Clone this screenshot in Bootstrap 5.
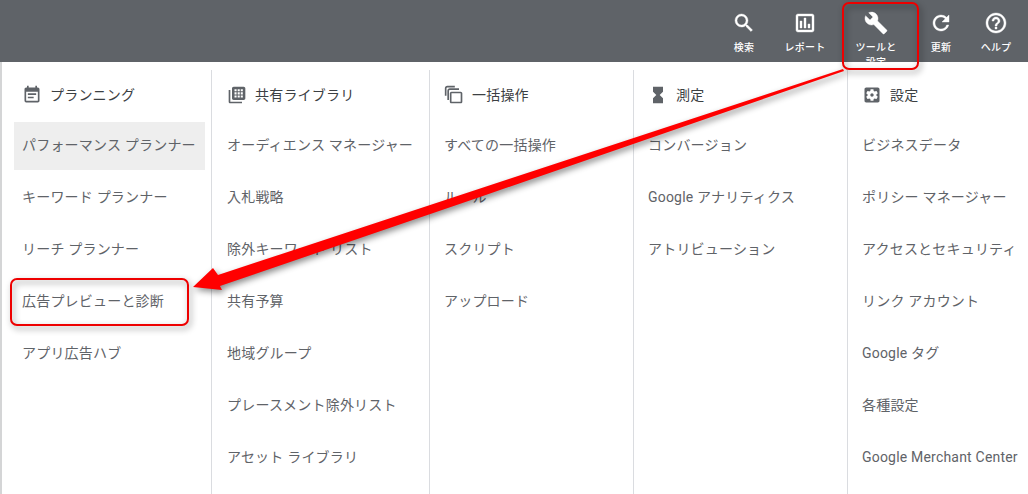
<!DOCTYPE html>
<html lang="ja">

<head>
    <meta charset="UTF-8">
    <meta name="viewport" content="width=device-width, initial-scale=1">
    <title>ツールと設定</title>
    <link href="https://cdn.jsdelivr.net/npm/bootstrap@5.3.0/dist/css/bootstrap.min.css" rel="stylesheet">
    <style>
        html, body { height: 494px; overflow: hidden; }
        body {
            position: relative;
            background: #d4d5d6;
            font-family: Roboto, "Noto Sans CJK JP", sans-serif;
            font-size: 14px;
            letter-spacing: .2px;
            color: #5f6368;
        }
        .top-bar { height: 62px; background: #5f6368; overflow: hidden; padding-right: 2px; }
        .tool-item { padding-top: 11px; color: #fff; font-size: 10px; line-height: 15px; font-weight: 500; text-align: center; }
        .tool-item svg { display: block; margin: 0 auto 5px; width: 24px; height: 24px; fill: #fff; stroke: #fff; stroke-width: .4; }
        .tool-60 { width: 60px; }
        .tool-62 { width: 62px; }
        .tool-50 { width: 50px; }
        .tool-wide { width: 80px; padding-left: 18px; padding-right: 18px; }
        .menu-panel { height: 432px; margin-left: 2px; background: #fff; padding-top: 8px; }
        .menu-col { border-left: 1px solid #dadce0; padding-left: 7px; padding-right: 6px; }
        .col-a { width: 209px; border-left: 0; padding-left: 12px; }
        .col-b { width: 218px; }
        .col-c { width: 204px; padding-left: 6px; }
        .col-d { width: 214px; padding-left: 6px; }
        .col-e { flex: 1; padding-left: 6px; padding-right: 0; }
        .menu-head { height: 48px; padding: 2px 0 0 8px; gap: 8px; color: #3c4043; white-space: nowrap; }
        .menu-head svg { width: 20px; height: 20px; fill: #5f6368; flex: none; }
        .menu-link { display: flex; align-items: center; height: 48px; margin-top: 4px; padding: 0 8px 2px; color: #5f6368; text-decoration: none; white-space: nowrap; }
        .menu-link.is-on { background: #eeeeee; }
        .notes-layer { position: absolute; left: 0; top: 0; width: 1028px; height: 494px; pointer-events: none; }
        .notes-layer .shadowed { filter: drop-shadow(2px 3px 3px rgba(0, 0, 0, .45)); }
    </style>
</head>

<body>

    <header class="top-bar d-flex justify-content-end">
        <div class="tool-item tool-60">
            <svg viewBox="0 0 24 24"><path d="M15.5 14h-.79l-.28-.27A6.471 6.471 0 0 0 16 9.5 6.5 6.5 0 1 0 9.5 16c1.61 0 3.09-.59 4.23-1.57l.27.28v.79l5 4.99L20.49 19l-4.99-5zm-6 0C7.01 14 5 11.99 5 9.5S7.01 5 9.5 5 14 7.01 14 9.5 11.99 14 9.5 14z"/></svg>
            検索
        </div>
        <div class="tool-item tool-62">
            <svg viewBox="0 0 24 24"><path d="M19 3H5c-1.1 0-2 .9-2 2v14c0 1.1.9 2 2 2h14c1.1 0 2-.9 2-2V5c0-1.1-.9-2-2-2zm0 16H5V5h14v14zM7 10h2v7H7zm4-3h2v10h-2zm4 6h2v4h-2z"/></svg>
            レポート
        </div>
        <div class="tool-item tool-wide">
            <svg viewBox="0 0 24 24"><path d="M22.7 19l-9.1-9.1c.9-2.3.4-5-1.5-6.9-2-2-5-2.4-7.4-1.3L9 6 6 9 1.6 4.7C.4 7.1.9 10.1 2.9 12.1c1.9 1.9 4.6 2.4 6.9 1.5l9.1 9.1c.4.4 1 .4 1.4 0l2.3-2.3c.5-.4.5-1.1.1-1.4z"/></svg>
            ツールと設定
        </div>
        <div class="tool-item tool-50">
            <svg viewBox="0 0 24 24"><path d="M17.65 6.35A7.958 7.958 0 0 0 12 4c-4.42 0-7.99 3.58-7.99 8s3.57 8 7.99 8c3.73 0 6.84-2.55 7.73-6h-2.08A5.99 5.99 0 0 1 12 18c-3.31 0-6-2.69-6-6s2.69-6 6-6c1.66 0 3.14.69 4.22 1.78L13 11h7V4l-2.35 2.35z"/></svg>
            更新
        </div>
        <div class="tool-item tool-60">
            <svg viewBox="0 0 24 24"><path d="M11 18h2v-2h-2v2zm1-16C6.48 2 2 6.48 2 12s4.48 10 10 10 10-4.48 10-10S17.52 2 12 2zm0 18c-4.41 0-8-3.59-8-8s3.59-8 8-8 8 3.59 8 8-3.59 8-8 8zm0-14c-2.21 0-4 1.79-4 4h2c0-1.1.9-2 2-2s2 .9 2 2c0 2-3 1.75-3 5h2c0-2.25 3-2.5 3-5 0-2.21-1.79-4-4-4z"/></svg>
            ヘルプ
        </div>
    </header>

    <div class="menu-panel d-flex">
        <!-- プランニング -->
        <div class="menu-col col-a">
            <div class="menu-head d-flex align-items-center">
                <svg viewBox="0 0 24 24"><path d="M17 10H7v2h10v-2zm2-7h-1V1h-2v2H8V1H6v2H5c-1.11 0-1.99.9-1.99 2L3 19a2 2 0 0 0 2 2h14c1.1 0 2-.9 2-2V5c0-1.1-.9-2-2-2zm0 16H5V8h14v11zm-5-5H7v2h7v-2z"/></svg>
                プランニング
            </div>
            <a class="menu-link is-on" href="#">パフォーマンス プランナー</a>
            <a class="menu-link" href="#">キーワード プランナー</a>
            <a class="menu-link" href="#">リーチ プランナー</a>
            <a class="menu-link" href="#">広告プレビューと診断</a>
            <a class="menu-link" href="#">アプリ広告ハブ</a>
        </div>

        <!-- 共有ライブラリ -->
        <div class="menu-col col-b">
            <div class="menu-head d-flex align-items-center">
                <svg viewBox="0 0 24 24"><path d="M4 6H2v14c0 1.1.9 2 2 2h14v-2H4V6z"/><path fill-rule="evenodd" d="M8 2h12c1.1 0 2 .9 2 2v12c0 1.1-.9 2-2 2H8c-1.1 0-2-.9-2-2V4c0-1.1.9-2 2-2zm1 3v2.5h2.5V5zm3.8 0v2.5h2.5V5zm3.7 0v2.5H19V5zM9 8.8v2.5h2.5V8.8zm3.8 0v2.5h2.5V8.8zm3.7 0v2.5H19V8.8zM9 12.5V15h2.5v-2.5zm3.8 0V15h2.5v-2.5zm3.7 0V15H19v-2.5z"/></svg>
                共有ライブラリ
            </div>
            <a class="menu-link" href="#">オーディエンス マネージャー</a>
            <a class="menu-link" href="#">入札戦略</a>
            <a class="menu-link" href="#">除外キーワード リスト</a>
            <a class="menu-link" href="#">共有予算</a>
            <a class="menu-link" href="#">地域グループ</a>
            <a class="menu-link" href="#">プレースメント除外リスト</a>
            <a class="menu-link" href="#">アセット ライブラリ</a>
        </div>

        <!-- 一括操作 -->
        <div class="menu-col col-c">
            <div class="menu-head d-flex align-items-center">
                <svg viewBox="0 0 24 24"><path d="M9 8h11c1.1 0 2 .9 2 2v10c0 1.1-.9 2-2 2H9c-1.1 0-2-.9-2-2V10c0-1.1.9-2 2-2zm0 2v10h11V10zM4 18V7c0-1.7 1.3-3 3-3h11v2H7c-.6 0-1 .4-1 1v11zM1 13V4c0-1.7 1.3-3 3-3h9v2H4c-.6 0-1 .4-1 1v9z"/></svg>
                一括操作
            </div>
            <a class="menu-link" href="#">すべての一括操作</a>
            <a class="menu-link" href="#">ルール</a>
            <a class="menu-link" href="#">スクリプト</a>
            <a class="menu-link" href="#">アップロード</a>
        </div>

        <!-- 測定 -->
        <div class="menu-col col-d">
            <div class="menu-head d-flex align-items-center">
                <svg viewBox="0 0 24 24"><path d="M6 2v6h.01L6 8.01 10 12l-4 4 .01.01H6V22h12v-5.99h-.01L18 16l-4-4 4-3.99-.01-.01H18V2H6z"/></svg>
                測定
            </div>
            <a class="menu-link" href="#">コンバージョン</a>
            <a class="menu-link" href="#">Google アナリティクス</a>
            <a class="menu-link" href="#">アトリビューション</a>
        </div>

        <!-- 設定 -->
        <div class="menu-col col-e">
            <div class="menu-head d-flex align-items-center">
                <svg viewBox="0 0 24 24"><path d="M12 10c-1.1 0-2 .9-2 2s.9 2 2 2 2-.9 2-2-.9-2-2-2zm7-7H5c-1.1 0-2 .9-2 2v14c0 1.1.9 2 2 2h14c1.1 0 2-.9 2-2V5c0-1.1-.9-2-2-2zm-1.75 9c0 .23-.02.46-.05.68l1.48 1.16c.13.11.17.3.08.45l-1.4 2.42c-.09.15-.27.21-.43.15l-1.74-.7c-.36.28-.76.51-1.18.69l-.26 1.85c-.03.17-.18.3-.35.3h-2.8c-.17 0-.32-.13-.35-.29l-.26-1.85c-.43-.18-.82-.41-1.18-.69l-1.74.7c-.16.06-.34 0-.43-.15l-1.4-2.42c-.09-.15-.05-.34.08-.45l1.48-1.16c-.03-.23-.05-.46-.05-.69 0-.23.02-.46.05-.68l-1.48-1.16c-.13-.11-.17-.3-.08-.45l1.4-2.42c.09-.15.27-.21.43-.15l1.74.7c.36-.28.76-.51 1.18-.69l.26-1.85c.03-.17.18-.3.35-.3h2.8c.17 0 .32.13.35.29l.26 1.85c.43.18.82.41 1.18.69l1.74-.7c.16-.06.34 0 .43.15l1.4 2.42c.09.15.05.34-.08.45l-1.48 1.16c.03.23.05.46.05.69z"/></svg>
                設定
            </div>
            <a class="menu-link" href="#">ビジネスデータ</a>
            <a class="menu-link" href="#">ポリシー マネージャー</a>
            <a class="menu-link" href="#">アクセスとセキュリティ</a>
            <a class="menu-link" href="#">リンク アカウント</a>
            <a class="menu-link" href="#">Google タグ</a>
            <a class="menu-link" href="#">各種設定</a>
            <a class="menu-link" href="#">Google Merchant Center</a>
        </div>
    </div>

    <!-- 注釈 (赤枠と矢印) -->
    <svg class="notes-layer" viewBox="0 0 1028 494">
        <g class="shadowed">
            <rect x="843" y="3" width="75" height="66" rx="6" fill="none" stroke="#ee0000" stroke-width="2"/>
            <rect x="11" y="279" width="177" height="46" rx="6" fill="none" stroke="#ee0000" stroke-width="2"/>
            <polygon points="193,287 213,268 218,275 843,69 844,71 480,197 220,286 222,290" fill="#ff0000"/>
        </g>
    </svg>

    <script src="https://cdn.jsdelivr.net/npm/bootstrap@5.3.0/dist/js/bootstrap.bundle.min.js"></script>
</body>

</html>
